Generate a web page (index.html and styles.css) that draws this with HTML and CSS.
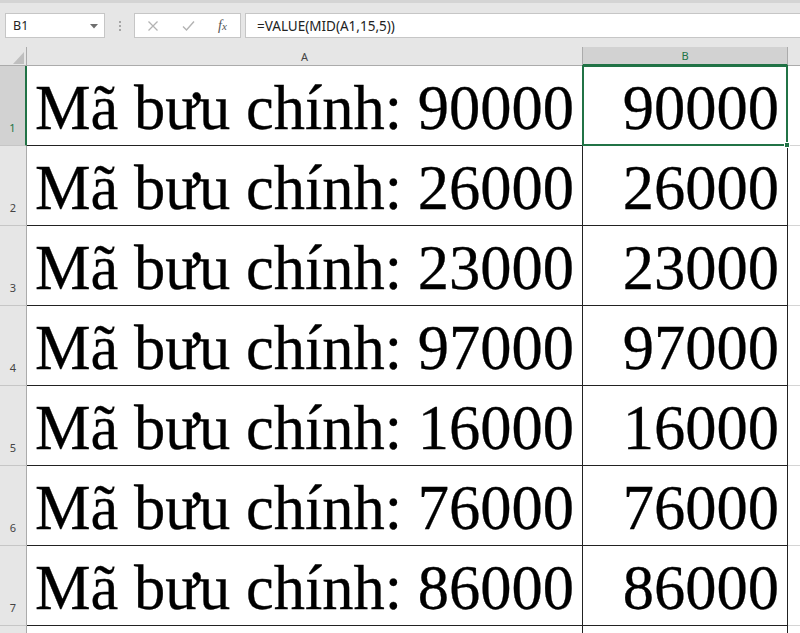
FILE: index.html
```html
<!DOCTYPE html>
<html>
<head>
<meta charset="utf-8">
<link rel="stylesheet" href="styles.css">
</head>
<body>
<div class="app">
  <div class="fbar">
    <div class="namebox">
      <span class="nb-text">B1</span>
      <svg class="dd" width="8" height="5" viewBox="0 0 8 5"><path d="M0 0H8L4 4.5Z" fill="#6e6e6e"/></svg>
    </div>
    <div class="grip"><i></i><i></i><i></i></div>
    <div class="fxbox">
      <svg class="ico" width="12" height="12" viewBox="0 0 12 12"><path d="M1.5 1.5L10.5 10.5M10.5 1.5L1.5 10.5" stroke="#b3b3b3" stroke-width="1.3" fill="none"/></svg>
      <svg class="ico" width="13" height="12" viewBox="0 0 13 12"><path d="M1 6.5L4.5 10L12 1.5" stroke="#b3b3b3" stroke-width="1.4" fill="none"/></svg>
      <span class="fx"><i>f</i><span class="fx-x">x</span></span>
    </div>
    <div class="formula">=VALUE(MID(A1,15,5))</div>
  </div>
  <div class="sheet">
    <div class="corner"><svg width="11" height="12" viewBox="0 0 11 12"><path d="M11 0V12H0Z" fill="#bfbfbf"/></svg></div>
    <div class="colh">A</div>
    <div class="colh colh-sel">B</div>
    <div class="colh colh-rest"></div>

    <div class="rowh rowh-sel">1</div>
    <div class="cell cell-a">Mã bưu chính: 90000</div>
    <div class="cell cell-b cell-active">90000<span class="handle"></span></div>
    <div class="cell cell-c"></div>

    <div class="rowh">2</div>
    <div class="cell cell-a">Mã bưu chính: 26000</div>
    <div class="cell cell-b">26000</div>
    <div class="cell cell-c"></div>

    <div class="rowh">3</div>
    <div class="cell cell-a">Mã bưu chính: 23000</div>
    <div class="cell cell-b">23000</div>
    <div class="cell cell-c"></div>

    <div class="rowh">4</div>
    <div class="cell cell-a">Mã bưu chính: 97000</div>
    <div class="cell cell-b">97000</div>
    <div class="cell cell-c"></div>

    <div class="rowh">5</div>
    <div class="cell cell-a">Mã bưu chính: 16000</div>
    <div class="cell cell-b">16000</div>
    <div class="cell cell-c"></div>

    <div class="rowh">6</div>
    <div class="cell cell-a">Mã bưu chính: 76000</div>
    <div class="cell cell-b">76000</div>
    <div class="cell cell-c"></div>

    <div class="rowh">7</div>
    <div class="cell cell-a">Mã bưu chính: 86000</div>
    <div class="cell cell-b">86000</div>
    <div class="cell cell-c"></div>

    <div class="rowh"></div>
    <div class="cell cell-a"></div>
    <div class="cell cell-b"></div>
    <div class="cell cell-c"></div>
  </div>
</div>
</body>
</html>
```

FILE: styles.css
```css
* { box-sizing: border-box; }
html, body {
  margin: 0;
  padding: 0;
  width: 800px;
  height: 633px;
  overflow: hidden;
  background: #e6e6e6;
}
.app {
  width: 800px;
  height: 633px;
  overflow: hidden;
  font-family: "Noto Sans", "Liberation Sans", sans-serif;
}
.fbar {
  height: 47px;
  background: #e6e6e6;
  border-top: 3px solid #d4d4d4;
  display: flex;
  align-items: flex-start;
  padding-top: 10px;
  padding-left: 5px;
}
.namebox {
  width: 100px;
  height: 25px;
  background: #fff;
  border: 1px solid #c6c6c6;
  display: flex;
  align-items: center;
  justify-content: space-between;
  padding: 0 6px 0 7px;
}
.nb-text {
  font-size: 12.5px;
  color: #222;
}
.dd { margin-top: 1px; }
.grip {
  width: 29px;
  height: 25px;
  display: flex;
  flex-direction: column;
  align-items: center;
  justify-content: center;
  gap: 2px;
}
.grip i {
  display: block;
  width: 2px;
  height: 2px;
  background: #a6a6a6;
}
.fxbox {
  width: 107px;
  height: 25px;
  background: #fff;
  border: 1px solid #c6c6c6;
  display: flex;
  align-items: center;
  padding-left: 12px;
  gap: 23px;
}
.fx {
  font-family: "Liberation Serif", serif;
  font-size: 14px;
  color: #555;
}
.fx i { font-style: italic; }
.fx-x { font-style: italic; font-size: 11px; }
.formula {
  flex: 1;
  margin-left: 4px;
  height: 25px;
  background: #fff;
  border: 1px solid #c6c6c6;
  border-right: none;
  font-size: 13.5px;
  color: #222;
  display: flex;
  align-items: center;
  padding-left: 11px;
}
.sheet {
  display: grid;
  grid-template-columns: 27px 556px 205px 12px;
  grid-template-rows: 19px repeat(8, 80px);
  background: #fff;
}
.corner {
  background: #e6e6e6;
  border-right: 1px solid #ababab;
  border-bottom: 1px solid #ababab;
  display: flex;
  align-items: flex-end;
  justify-content: flex-end;
  padding: 0 2px 1px 0;
}
.colh {
  background: #e6e6e6;
  border-right: 1px solid #ababab;
  border-bottom: 1px solid #ababab;
  font-size: 11px;
  color: #444;
  display: flex;
  align-items: center;
  justify-content: center;
  line-height: 1;
}
.colh-sel {
  background: #d2d2d2;
  border-bottom: 2px solid #217346;
  color: #217346;
}
.colh-rest { border-right: none; }
.rowh {
  background: #e6e6e6;
  border-right: 1px solid #ababab;
  border-bottom: 1px solid #c6c6c6;
  font-size: 11px;
  color: #444;
  display: flex;
  align-items: flex-end;
  justify-content: center;
  padding-bottom: 12px;
  line-height: 1;
}
.rowh-sel {
  background: #d2d2d2;
  border-right: 2px solid #217346;
  color: #217346;
}
.cell {
  background: #fff;
  font-family: "Liberation Serif", "Times New Roman", serif;
  font-size: 62.5px;
  line-height: 1;
  color: #000;
  -webkit-text-stroke: 0.3px #000;
  display: flex;
  align-items: flex-end;
  padding-bottom: 6px;
  white-space: nowrap;
  overflow: hidden;
}
.cell-a {
  border-right: 1px solid #222;
  border-bottom: 1px solid #222;
  padding-left: 8px;
}
.cell-b {
  border-right: 1px solid #222;
  border-bottom: 1px solid #222;
  justify-content: flex-end;
  padding-right: 8px;
}
.cell-c {
  border-bottom: 1px solid #d4d4d4;
}
.cell-active {
  position: relative;
  overflow: visible;
}
.cell-active::after {
  content: "";
  position: absolute;
  left: -1px;
  top: -1px;
  right: -1px;
  bottom: -1px;
  border: 2px solid #217346;
  pointer-events: none;
}
.handle {
  position: absolute;
  right: -3px;
  bottom: -3px;
  width: 6px;
  height: 6px;
  background: #217346;
  border: 1px solid #fff;
  z-index: 2;
}
```
